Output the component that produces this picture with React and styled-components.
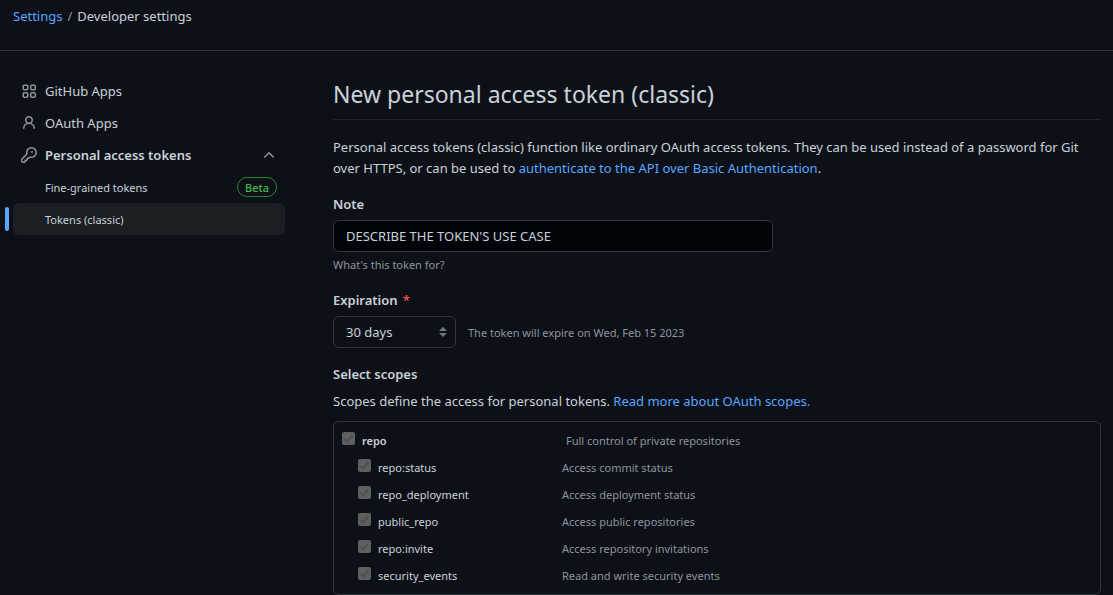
import React from "react";
import styled, { createGlobalStyle, css } from "styled-components";

const GlobalStyle = createGlobalStyle`
  *, *::before, *::after { box-sizing: border-box; }
  body {
    margin: 0;
    background: #0d1117;
    color: #c9d1d9;
    font-family: "Noto Sans", "Liberation Sans", sans-serif;
    font-size: 13px;
    line-height: 21px;
  }
`;

const Link = styled.a`
  color: #58a6ff;
  text-decoration: none;
  &:hover { text-decoration: underline; }
`;

const Breadcrumb = styled.nav`
  display: flex;
  gap: 5px;
  height: 51px;
  padding: 6px 13px 0;
  border-bottom: 1px solid #30363d;
`;

const Separator = styled.span`
  color: #8b949e;
`;

const Page = styled.div`
  display: flex;
  align-items: flex-start;
  gap: 48px;
  padding: 24px 12px 0 13px;
`;

const Sidebar = styled.nav`
  flex: 0 0 272px;
`;

const NavList = styled.ul`
  list-style: none;
  margin: 0;
  padding: 0;
`;

const itemStyle = css`
  position: relative;
  display: flex;
  align-items: center;
  gap: 8px;
  width: 100%;
  height: 32px;
  padding: 0 8px;
  border: 0;
  border-radius: 6px;
  background: transparent;
  color: #c9d1d9;
  font: inherit;
  text-align: left;
  text-decoration: none;
`;

const NavLink = styled.a`
  ${itemStyle}
`;

const NavToggle = styled.button`
  ${itemStyle}
  font-weight: 600;
  cursor: pointer;
`;

const SubLink = styled.a`
  ${itemStyle}
  padding-left: 32px;
  font-size: 11px;
  background: ${(p) => (p.$current ? "#1b1f23" : "transparent")};

  &::before {
    content: "";
    display: ${(p) => (p.$current ? "block" : "none")};
    position: absolute;
    left: -8px;
    top: 4px;
    width: 4px;
    height: 24px;
    border-radius: 6px;
    background: #58a6ff;
  }
`;

const Grow = styled.span`
  flex: 1;
`;

const Badge = styled.span`
  height: 20px;
  padding: 0 7px;
  border: 1px solid #238636;
  border-radius: 10px;
  color: #3fb950;
  font-size: 11px;
  font-weight: 500;
  line-height: 19px;
`;

const Icon = styled.svg`
  flex: none;
  width: 16px;
  height: 16px;
  fill: #8b949e;
`;

const Main = styled.main`
  flex: 1;
  min-width: 0;
`;

const Title = styled.h1`
  margin: 0 0 17px;
  padding-bottom: 6px;
  border-bottom: 1px solid #21262d;
  font-size: 23px;
  font-weight: 400;
  line-height: 38px;
`;

const Text = styled.p`
  margin: 0;
`;

const Field = styled.div`
  margin-top: 15px;
`;

const Label = styled.label`
  display: block;
  margin-bottom: 5px;
  font-weight: 600;
`;

const Required = styled.span`
  margin-left: 5px;
  color: #f85149;
`;

const Hint = styled.span`
  color: #8b949e;
  font-size: 11px;
`;

const FieldHint = styled.p`
  margin: 3px 0 0;
  color: #8b949e;
  font-size: 11px;
  line-height: 20px;
`;

const TextInput = styled.input`
  display: block;
  width: 440px;
  max-width: 100%;
  height: 32px;
  padding: 0 12px;
  border: 1px solid #30363d;
  border-radius: 6px;
  background: #010409;
  color: #c9d1d9;
  font: inherit;
`;

const Row = styled.div`
  display: flex;
  align-items: center;
  gap: 12px;
`;

const SelectBox = styled.div`
  display: grid;
  align-items: center;
  width: 123px;

  & > * { grid-area: 1 / 1; }
  & > svg {
    justify-self: end;
    margin-right: 5px;
    fill: #6e7681;
    pointer-events: none;
  }
`;

const Select = styled.select`
  appearance: none;
  width: 100%;
  height: 32px;
  padding: 0 24px 0 12px;
  border: 1px solid #30363d;
  border-radius: 6px;
  background: #0d1117;
  color: #c9d1d9;
  font: inherit;
`;

const Heading = styled.h2`
  margin: 16px 0 6px;
  font-size: 13px;
  font-weight: 600;
`;

const ScopeBox = styled.ul`
  list-style: none;
  margin: 9px 0 0;
  padding: 0;
  border: 1px solid #30363d;
  border-radius: 6px;
`;

const ScopeGroup = styled.li`
  padding: 5px 8px;
`;

const ScopeList = styled.ul`
  list-style: none;
  margin: 0;
  padding: 0 0 0 16px;
`;

const Scope = styled.div`
  display: flex;
  align-items: center;
  height: 27px;
  font-size: 11px;
`;

const ScopeLabel = styled.label`
  display: flex;
  align-items: center;
  gap: 7px;
  flex: 0 0 ${(p) => (p.$parent ? 224 : 204)}px;
  font-weight: ${(p) => (p.$parent ? 600 : 400)};
`;

const CheckBox = styled.span`
  display: grid;
  width: 13px;
  height: 13px;
  margin-bottom: 4px;

  & > * { grid-area: 1 / 1; }
`;

const CheckInput = styled.input`
  appearance: none;
  width: 13px;
  height: 13px;
  margin: 0;
  border-radius: 2px;
  background: #5f5f5f;
`;

const CheckMark = styled.svg`
  width: 13px;
  height: 13px;
  fill: none;
  stroke: #4f4f4f;
  stroke-width: 2;
  pointer-events: none;
`;

const AppsIcon = () => (
  <Icon viewBox="0 0 16 16" aria-hidden="true">
    <g fill="none" stroke="#8b949e" strokeWidth="1.5">
      <rect x="2.25" y="2.25" width="4.5" height="4.5" rx="1" />
      <rect x="9.75" y="2.25" width="4.5" height="4.5" rx="1" />
      <rect x="2.25" y="9.75" width="4.5" height="4.5" rx="1" />
      <rect x="9.75" y="9.75" width="4.5" height="4.5" rx="1" />
    </g>
  </Icon>
);

const PersonIcon = () => (
  <Icon viewBox="0 0 16 16" aria-hidden="true">
    <path d="M10.561 8.073a6.005 6.005 0 0 1 3.432 5.142.75.75 0 1 1-1.498.07 4.5 4.5 0 0 0-8.99 0 .75.75 0 0 1-1.498-.07 6.004 6.004 0 0 1 3.431-5.142 3.999 3.999 0 1 1 5.123 0ZM10.5 5a2.5 2.5 0 1 0-5 0 2.5 2.5 0 0 0 5 0Z" />
  </Icon>
);

const KeyIcon = () => (
  <Icon viewBox="0 0 16 16" aria-hidden="true">
    <path d="M10.5 0a5.499 5.499 0 1 1-1.288 10.848l-.932.932a.749.749 0 0 1-.53.22H7v.75a.749.749 0 0 1-.22.53l-.5.5a.749.749 0 0 1-.53.22H5v.75a.749.749 0 0 1-.22.53l-.5.5a.749.749 0 0 1-.53.22h-2A1.75 1.75 0 0 1 0 14.25v-2c0-.199.079-.389.22-.53l4.932-4.932A5.5 5.5 0 0 1 10.5 0Zm-4 5.5c-.001.431.069.86.205 1.269a.75.75 0 0 1-.181.768L1.5 12.56v1.69c0 .138.112.25.25.25h1.69l.06-.06v-1.19a.75.75 0 0 1 .75-.75h1.19l.06-.06v-1.19a.75.75 0 0 1 .75-.75h1.19l1.023-1.025a.75.75 0 0 1 .768-.18A4 4 0 1 0 6.5 5.5ZM11 6a1 1 0 1 1 0-2 1 1 0 0 1 0 2Z" />
  </Icon>
);

const ChevronUpIcon = () => (
  <Icon viewBox="0 0 16 16" aria-hidden="true">
    <path d="M3.22 10.53a.749.749 0 0 1 0-1.06l4.25-4.25a.749.749 0 0 1 1.06 0l4.25 4.25a.749.749 0 1 1-1.06 1.06L8 6.811 4.28 10.53a.749.749 0 0 1-1.06 0Z" />
  </Icon>
);

const SelectIcon = () => (
  <Icon viewBox="0 0 16 16" aria-hidden="true">
    <path d="M4.427 9.427l3.396 3.396a.251.251 0 00.354 0l3.396-3.396A.25.25 0 0011.396 9H4.604a.25.25 0 00-.177.427zM4.423 6.47L7.82 3.072a.25.25 0 01.354 0L11.57 6.47a.25.25 0 01-.177.427H4.6a.25.25 0 01-.177-.427z" />
  </Icon>
);

const repoScopes = [
  ["repo:status", "Access commit status"],
  ["repo_deployment", "Access deployment status"],
  ["public_repo", "Access public repositories"],
  ["repo:invite", "Access repository invitations"],
  ["security_events", "Read and write security events"],
];

function ScopeRow({ name, description, parent }) {
  return (
    <Scope>
      <ScopeLabel $parent={parent}>
        <CheckBox>
          <CheckInput type="checkbox" name="scopes" value={name} defaultChecked disabled />
          <CheckMark viewBox="0 0 13 13" aria-hidden="true">
            <path d="M2.5 7 5 9.5 10.5 3.5" />
          </CheckMark>
        </CheckBox>
        {name}
      </ScopeLabel>
      <Hint>{description}</Hint>
    </Scope>
  );
}

export default function App() {
  return (
    <>
      <GlobalStyle />
      <Breadcrumb aria-label="Breadcrumb">
        <Link href="#settings">Settings</Link>
        <Separator>/</Separator>
        <span>Developer settings</span>
      </Breadcrumb>
      <Page>
        <Sidebar aria-label="Developer settings">
          <NavList>
            <li><NavLink href="#apps"><AppsIcon />GitHub Apps</NavLink></li>
            <li><NavLink href="#oauth"><PersonIcon />OAuth Apps</NavLink></li>
            <li>
              <NavToggle type="button" aria-expanded="true">
                <KeyIcon />
                <Grow>Personal access tokens</Grow>
                <ChevronUpIcon />
              </NavToggle>
              <NavList>
                <li>
                  <SubLink href="#fine-grained">
                    <Grow>Fine-grained tokens</Grow>
                    <Badge>Beta</Badge>
                  </SubLink>
                </li>
                <li><SubLink href="#classic" $current aria-current="page">Tokens (classic)</SubLink></li>
              </NavList>
            </li>
          </NavList>
        </Sidebar>
        <Main>
          <Title>New personal access token (classic)</Title>
          <Text>
            Personal access tokens (classic) function like ordinary OAuth access tokens. They can be used
            instead of a password for Git over HTTPS, or can be used to{" "}
            <Link href="#basic-auth">authenticate to the API over Basic Authentication</Link>.
          </Text>
          <Field>
            <Label htmlFor="note">Note</Label>
            <TextInput id="note" type="text" defaultValue="DESCRIBE THE TOKEN'S USE CASE" />
            <FieldHint>What's this token for?</FieldHint>
          </Field>
          <Field>
            <Label htmlFor="expiration">Expiration<Required>*</Required></Label>
            <Row>
              <SelectBox>
                <Select id="expiration" defaultValue="30">
                  <option value="7">7 days</option>
                  <option value="30">30 days</option>
                  <option value="60">60 days</option>
                  <option value="90">90 days</option>
                </Select>
                <SelectIcon />
              </SelectBox>
              <Hint>The token will expire on Wed, Feb 15 2023</Hint>
            </Row>
          </Field>
          <Heading>Select scopes</Heading>
          <Text>
            Scopes define the access for personal tokens. <Link href="#scopes">Read more about OAuth scopes.</Link>
          </Text>
          <ScopeBox>
            <ScopeGroup>
              <ScopeRow name="repo" description="Full control of private repositories" parent />
              <ScopeList>
                {repoScopes.map(([name, description]) => (
                  <li key={name}><ScopeRow name={name} description={description} /></li>
                ))}
              </ScopeList>
            </ScopeGroup>
          </ScopeBox>
        </Main>
      </Page>
    </>
  );
}
